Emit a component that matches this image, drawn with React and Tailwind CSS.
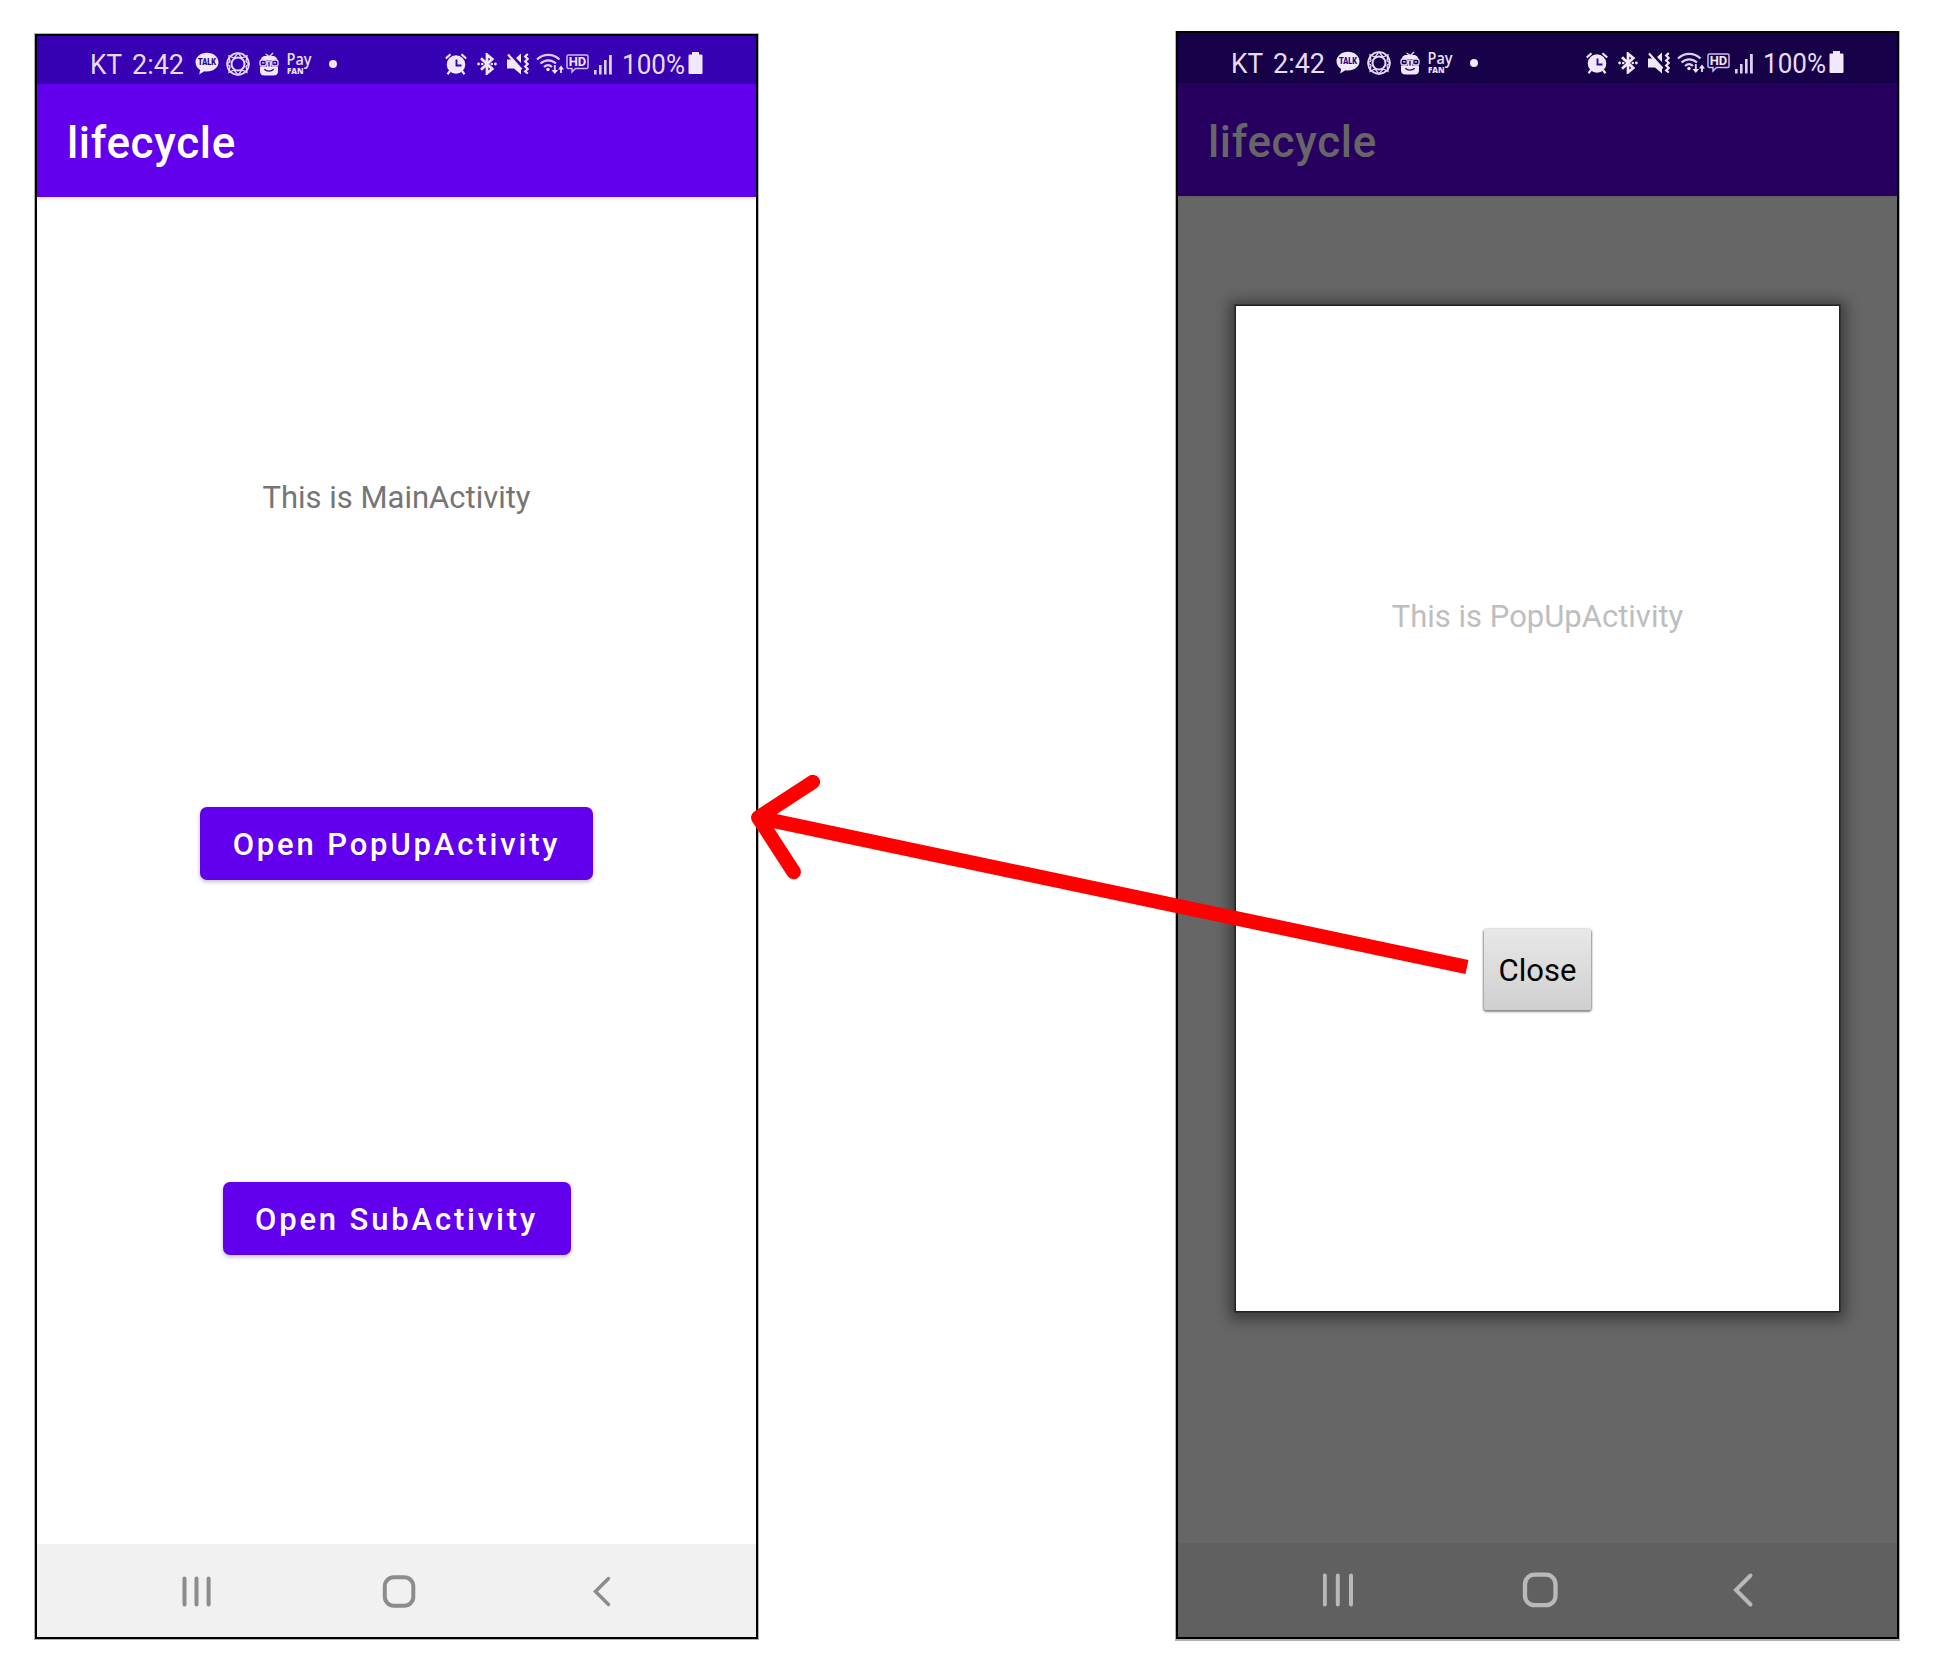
import React from "react";

function KakaoIcon() {
  return (
    <svg className="h-[23px] w-[24px] shrink-0" viewBox="0 0 24 23">
      <path d="M12 .8C5.600.8.5 5 .5 10.200c0 3.300 1.900 6 4.600 7.700l-.9 4.600 5.200-3.300c.8.100 1.700.200 2.600.200 6.400 0 11.500-4 11.500-9.200S18.400.8 12 .8z" fill="#f0e8fb" />
      <text x="12" y="13.300" textAnchor="middle" fontFamily="Roboto, sans-serif" fontWeight="900" fontSize="8.200" textLength="18" lengthAdjust="spacingAndGlyphs" fill="#2a0484">TALK</text>
    </svg>
  );
}

function RingIcon() {
  return (
    <svg className="h-[24px] w-[24px] shrink-0" viewBox="0 0 24 24" fill="none" stroke="#e4d9f6">
      <circle cx="12" cy="12" r="10.900" strokeWidth="1.700" />
      <circle cx="12" cy="12" r="6.500" strokeWidth="2" />
      <path strokeWidth="1.300" d="M12 1l4 5 5-2.200-1 6 3 2.200-3 2.300 1 6-5-2.300-4 5-4-5-5 2.300 1-6-3-2.300 3-2.200-1-6 5 2.200z" />
    </svg>
  );
}

function MascotIcon() {
  return (
    <svg className="h-[24px] w-[20px] shrink-0" viewBox="0 0 20 24">
      <path d="M6.500 2l4 2.500L14 1" stroke="#e4d9f6" strokeWidth="1.400" fill="none" />
      <path d="M5 4h10q3 1 3.500 4.200H1.500Q2 5 5 4z" fill="#f0e8fb" />
      <path d="M1 14.500h18V19q0 4.500-4.500 4.500h-9Q1 23.500 1 19z" fill="#f0e8fb" />
      <g fill="none" stroke="#e4d9f6" strokeWidth="1.300">
        <rect x="1" y="8" width="6.300" height="6" rx="2" />
        <rect x="12.700" y="8" width="6.300" height="6" rx="2" />
        <path d="M8.700 15V9.200h2.600V15" />
      </g>
      <path d="M3 10.800h2.500M14.500 10.800H17" stroke="#e4d9f6" strokeWidth="1.300" />
      <path d="M5.300 17.300c2.600 2.400 6.800 2.400 9.400 0" fill="none" stroke="#2a0484" strokeWidth="1.300" />
    </svg>
  );
}

function PayIcon() {
  return (
    <svg className="h-[24px] w-[26px] shrink-0 overflow-visible" viewBox="0 0 26 24" fill="#e9e0f8" fontFamily="'Open Sans', sans-serif">
      <text x="-0.500" y="13" fontSize="15.500" fontWeight="600" textLength="25" lengthAdjust="spacingAndGlyphs">Pay</text>
      <text x="0" y="21.800" fontSize="8.200" fontWeight="800" textLength="16.500" lengthAdjust="spacingAndGlyphs">FAN</text>
    </svg>
  );
}

function AlarmIcon() {
  return (
    <svg className="h-[22px] w-[22px] shrink-0" viewBox="0 0 22 22">
      <circle cx="11" cy="11.500" r="9.300" fill="#f0e8fb" />
      <path d="M.8 5.500L5.500 1.200M21.200 5.500L16.500 1.200M5 18l-2.500 3.200M17 18l2.500 3.200" stroke="#f0e8fb" strokeWidth="2.200" />
      <path d="M11.500 6.500v6h5" fill="none" stroke="#3700b3" strokeWidth="1.900" />
    </svg>
  );
}

function BluetoothIcon() {
  return (
    <svg className="h-[22px] w-[20px] shrink-0" viewBox="0 0 20 22">
      <path d="M4 5.300l11.300 10.700-5.300 4.300V1.700l5.300 4.300L4 16.700" fill="none" stroke="#f0e8fb" strokeWidth="2.700" />
      <circle cx="1.600" cy="11" r="1.400" fill="#f0e8fb" />
      <circle cx="5.200" cy="11" r="1.300" fill="#f0e8fb" />
      <circle cx="14.800" cy="11" r="1.300" fill="#f0e8fb" />
      <circle cx="18.400" cy="11" r="1.400" fill="#f0e8fb" />
    </svg>
  );
}

function MuteIcon() {
  return (
    <svg className="h-[22px] w-[22px] shrink-0" viewBox="0 0 22 22">
      <path d="M0 6.500h5l9 9.500V21.500l-7-6H0zM9 5l5-4.500V10z" fill="#f0e8fb" />
      <path d="M1 1.500l13.500 15" stroke="#f0e8fb" strokeWidth="2.300" />
      <path d="M20.800 1l-2.600 2.500 2.600 2.500-2.600 2.500 2.600 2.500-2.600 2.500 2.600 2.500-2.600 2.500 2.600 2" fill="none" stroke="#f0e8fb" strokeWidth="2.200" />
    </svg>
  );
}

function WifiIcon() {
  return (
    <svg className="h-[22px] w-[28px] shrink-0" viewBox="0 0 28 22" fill="none" stroke="#dccff4" strokeWidth="2.200">
      <path d="M1 6.500C7.500.2 17 .2 23.500 6.500M4.500 10.500c4.500-4.300 11-4.300 15.500 0M8 14c2.500-2.300 5.500-2.300 8 0" />
      <circle cx="12" cy="16.500" r="1.700" fill="#f0e8fb" stroke="none" />
      <path d="M18.800 12v6M25 20v-6" strokeWidth="1.900" />
      <path d="M15.500 17h6.600l-3.300 4zM22 16.500h6L25 12.500z" fill="#f0e8fb" stroke="none" />
    </svg>
  );
}

function HdIcon() {
  return (
    <svg className="h-[20px] w-[23px] shrink-0" viewBox="0 0 23 20">
      <path d="M2.500 1h18q1.500 0 1.500 1.500v10.500q0 1.500-1.500 1.500H9.500l-3.500 3.500V14.500H2.500Q1 14.500 1 13V2.500Q1 1 2.500 1z" fill="none" stroke="#cdbcf0" strokeWidth="1.500" />
      <text x="11.500" y="12" textAnchor="middle" fontFamily="Roboto, sans-serif" fontWeight="700" fontSize="12" textLength="17.500" lengthAdjust="spacingAndGlyphs" fill="#f0e8fb">HD</text>
    </svg>
  );
}

function SignalIcon() {
  return (
    <svg className="h-[22px] w-[20px] shrink-0" viewBox="0 0 20 22" fill="#dccff4">
      <rect x="1" y="17" width="2.600" height="4.500" />
      <rect x="6" y="12" width="2.600" height="9.500" />
      <rect x="11" y="7" width="2.600" height="14.500" />
      <rect x="16" y="2" width="2.800" height="19.500" />
    </svg>
  );
}

function BatteryIcon() {
  return (
    <svg className="h-[22px] w-[15px] shrink-0" viewBox="0 0 15 22">
      <path d="M4 0h7v2.500h2.500q1 0 1 1V21q0 1-1 1h-12q-1 0-1-1V3.500q0-1 1-1H4z" fill="#f0e8fb" />
    </svg>
  );
}

function StatusText({ text, width }) {
  return (
    <svg className="h-[28px] shrink-0 overflow-visible" width={width} viewBox={`0 0 ${width} 28`}>
      <text x="0" y="23" fontFamily="Roboto, sans-serif" fontSize="27" textLength={width} lengthAdjust="spacingAndGlyphs" fill="#e6dcf8">{text}</text>
    </svg>
  );
}

function StatusBar() {
  return (
    <div className="flex items-start pl-[53px]">
      <div className="flex w-[105px] gap-[10px]">
        <StatusText text="KT" width={32} />
        <StatusText text="2:42" width={52} />
      </div>
      <div className="flex pt-[1px]">
        <KakaoIcon />
        <span className="w-[7px]" />
        <RingIcon />
        <span className="w-[9px]" />
        <MascotIcon />
        <span className="w-[8px]" />
        <PayIcon />
        <span className="ml-[16px] mt-[8px] h-[8px] w-[8px] rounded-full bg-[#f0e8fb]" />
      </div>
      <div className="ml-[108px] flex pt-[2px]">
        <AlarmIcon />
        <span className="w-[10px]" />
        <BluetoothIcon />
        <span className="w-[10px]" />
        <MuteIcon />
        <span className="w-[7px]" />
        <WifiIcon />
        <span className="w-[2px]" />
        <div className="pt-[1px]"><HdIcon /></div>
        <span className="w-[4px]" />
        <SignalIcon />
      </div>
      <div className="ml-[9px] flex"><StatusText text="100%" width={63} /></div>
      <div className="ml-[3px] pt-[1px]"><BatteryIcon /></div>
    </div>
  );
}

function NavIcons() {
  return (
    <svg className="h-[36px] w-[430px]" viewBox="0 0 430 36" fill="none" stroke="#8c8c8c" strokeLinecap="round">
      <path d="M2.500 5.500v26M14.500 5.500v26M26.600 5.500v26" strokeWidth="4" />
      <rect x="202.800" y="4.200" width="28.500" height="28.500" rx="9" strokeWidth="4" />
      <path d="M426.500 5.500l-13 13 13 13" strokeWidth="3.500" />
    </svg>
  );
}

function NavIconsDimmed() {
  return (
    <svg className="h-[36px] w-[432px]" viewBox="0 0 432 36" fill="none" stroke="#b9b9b9" strokeLinecap="round">
      <path d="M1.800 3.500v29M14.800 3.500v29M28 3.500v29" strokeWidth="4" />
      <rect x="202" y="2.700" width="30.500" height="30.500" rx="9.500" strokeWidth="4.300" />
      <path d="M427.500 3.500L413 18l14.500 14.500" strokeWidth="4" />
    </svg>
  );
}

function PurpleButton({ children, className }) {
  return (
    <button className={`flex items-center justify-center rounded-[7px] bg-[#6200ee] pt-[4px] text-[31px] font-medium tracking-[2.850px] text-white shadow-[0_2px_4px_rgba(0,0,0,0.25)] ${className}`}>
      {children}
    </button>
  );
}

export default function App() {
  return (
    <div className="relative flex h-[1670px] w-[1940px] items-start bg-white font-[Roboto,sans-serif]">
      <section className="ml-[35px] mt-[34px] flex h-[1605px] w-[723px] flex-col border-2 border-black bg-white shadow-[0_0_0_1px_rgba(0,0,0,0.3)]">
        <div className="h-[48px] shrink-0 bg-[#3700b3] pt-[15px]"><StatusBar /></div>
        <header className="flex h-[113px] shrink-0 items-center bg-[#6200ee] pl-[30px] pt-[4px] text-[44px] font-medium tracking-[0.650px] text-white shadow-[0_2px_3px_rgba(0,0,0,0.12)]">
          lifecycle
        </header>
        <main className="flex flex-1 flex-col items-center">
          <p className="mt-[281px] h-[40px] text-[31px] leading-[40px] text-[#757575]">This is MainActivity</p>
          <PurpleButton className="mt-[289px] h-[73px] w-[393px]">Open PopUpActivity</PurpleButton>
          <PurpleButton className="mt-[302px] h-[73px] w-[348px]">Open SubActivity</PurpleButton>
        </main>
        <nav className="flex h-[93px] shrink-0 items-center bg-[#f1f1f1] pl-[145px]"><NavIcons /></nav>
      </section>

      <section className="ml-[418px] mt-[31px] flex h-[1608px] w-[723px] flex-col border-2 border-black bg-[#666666] shadow-[0_1px_0_1px_rgba(0,0,0,0.3)]">
        <div className="h-[50px] shrink-0 bg-[#160048] pt-[17px]"><StatusBar /></div>
        <header className="flex h-[113px] shrink-0 items-center bg-[#27005f] pl-[30px] pt-[4px] text-[44px] font-medium tracking-[0.650px] text-[#666666] shadow-[0_1px_2px_rgba(0,0,0,0.1)]">
          lifecycle
        </header>
        <main className="flex flex-1 flex-col items-center pt-[110px]">
          <div className="flex h-[1005px] w-[603px] flex-col items-center bg-white shadow-[0_0_0_1.500px_#222,0_2px_13px_7px_rgba(0,0,0,0.4)]">
            <p className="mt-[291px] h-[40px] text-[31px] leading-[40px] text-[#bebebe]">This is PopUpActivity</p>
            <button className="mt-[292px] flex h-[81px] w-[107px] items-center justify-center rounded-[3px] bg-linear-to-b from-[#e8e8e8] to-[#cfcfcf] pt-[4px] text-[31px] text-black shadow-[0_1px_2px_1px_rgba(0,0,0,0.45)]">Close</button>
          </div>
        </main>
        <nav className="flex h-[94px] shrink-0 items-center bg-[#606060] pl-[145px]"><NavIconsDimmed /></nav>
      </section>

      <svg className="absolute left-[740px] top-[760px] h-[230px] w-[740px]" viewBox="740 760 740 230" fill="none" stroke="#ff0000" strokeWidth="14.500">
        <path d="M1467 967L758 817.500" />
        <path d="M812.800 782L758.300 817.500L793.700 872" strokeLinecap="round" strokeLinejoin="round" />
      </svg>
    </div>
  );
}
